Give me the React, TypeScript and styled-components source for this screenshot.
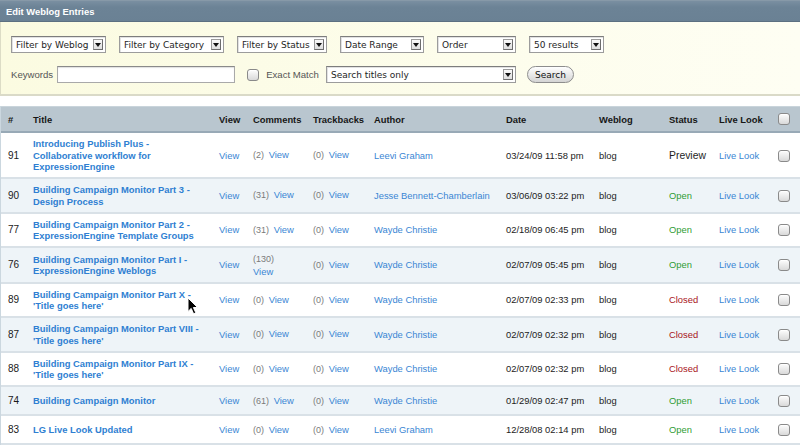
import * as React from "react";
import styled, { createGlobalStyle } from "styled-components";

type Status = "Preview" | "Open" | "Closed";

type Entry = {
  id: number;
  title: string;
  comments: number;
  trackbacks: number;
  author: string;
  date: string;
  status: Status;
};

const entries: Array<Entry> = [
  { id: 91, title: "Introducing Publish Plus - Collaborative workflow for ExpressionEngine", comments: 2, trackbacks: 0, author: "Leevi Graham", date: "03/24/09 11:58 pm", status: "Preview" },
  { id: 90, title: "Building Campaign Monitor Part 3 - Design Process", comments: 31, trackbacks: 0, author: "Jesse Bennett-Chamberlain", date: "03/06/09 03:22 pm", status: "Open" },
  { id: 77, title: "Building Campaign Monitor Part 2 - ExpressionEngine Template Groups", comments: 31, trackbacks: 0, author: "Wayde Christie", date: "02/18/09 06:45 pm", status: "Open" },
  { id: 76, title: "Building Campaign Monitor Part I - ExpressionEngine Weblogs", comments: 130, trackbacks: 0, author: "Wayde Christie", date: "02/07/09 05:45 pm", status: "Open" },
  { id: 89, title: "Building Campaign Monitor Part X - 'Title goes here'", comments: 0, trackbacks: 0, author: "Wayde Christie", date: "02/07/09 02:33 pm", status: "Closed" },
  { id: 87, title: "Building Campaign Monitor Part VIII - 'Title goes here'", comments: 0, trackbacks: 0, author: "Wayde Christie", date: "02/07/09 02:32 pm", status: "Closed" },
  { id: 88, title: "Building Campaign Monitor Part IX - 'Title goes here'", comments: 0, trackbacks: 0, author: "Wayde Christie", date: "02/07/09 02:32 pm", status: "Closed" },
  { id: 74, title: "Building Campaign Monitor", comments: 61, trackbacks: 0, author: "Wayde Christie", date: "01/29/09 02:47 pm", status: "Open" },
  { id: 83, title: "LG Live Look Updated", comments: 0, trackbacks: 0, author: "Leevi Graham", date: "12/28/08 02:14 pm", status: "Open" },
];

const filters = [
  { label: "Filter by Weblog", w: 95 },
  { label: "Filter by Category", w: 105 },
  { label: "Filter by Status", w: 90 },
  { label: "Date Range", w: 84 },
  { label: "Order", w: 79 },
  { label: "50 results", w: 75 },
];

const columns = [
  { label: "#", w: 25 },
  { label: "Title", w: 186 },
  { label: "View", w: 34 },
  { label: "Comments", w: 60 },
  { label: "Trackbacks", w: 61 },
  { label: "Author", w: 132 },
  { label: "Date", w: 93 },
  { label: "Weblog", w: 70 },
  { label: "Status", w: 50 },
  { label: "Live Look", w: 59 },
  { label: "", w: 30 },
];

export default function App() {
  return (
    <Page>
      <GlobalStyle />
      <TitleBar>Edit Weblog Entries</TitleBar>
      <FilterPanel>
        <FilterRow>
          {filters.map((f) => (
            <SelectBox $w={f.w} key={f.label}>
              {f.label}
              <Arrow />
            </SelectBox>
          ))}
        </FilterRow>
        <FilterRow>
          <Label>Keywords</Label>
          <TextInput />
          <ExactMatch>
            <Check />
            <Label>Exact Match</Label>
          </ExactMatch>
          <SelectBox $w={190}>
            Search titles only
            <Arrow />
          </SelectBox>
          <SearchButton>Search</SearchButton>
        </FilterRow>
      </FilterPanel>

      <Table>
        <colgroup>
          {columns.map((c, i) => (
            <col key={i} style={{ width: c.w }} />
          ))}
        </colgroup>
        <thead>
          <tr>
            {columns.map((c, i) => (
              <Th key={i}>{c.label === "" ? <Check /> : c.label}</Th>
            ))}
          </tr>
        </thead>
        <tbody>
          {entries.map((e, index) => (
            <Row $alt={index % 2 === 1} key={e.id}>
              <IdCell>{e.id}</IdCell>
              <TitleCell>
                <TitleLink>{e.title}</TitleLink>
              </TitleCell>
              <Td>
                <Link>View</Link>
              </Td>
              <CountCell>
                <Count>({e.comments})</Count> <Link>View</Link>
              </CountCell>
              <CountCell>
                <Count>({e.trackbacks})</Count> <Link>View</Link>
              </CountCell>
              <Td>
                <Link>{e.author}</Link>
              </Td>
              <Td>{e.date}</Td>
              <Td>blog</Td>
              <Td>
                <StatusText $status={e.status}>{e.status}</StatusText>
              </Td>
              <Td>
                <Link>Live Look</Link>
              </Td>
              <Td>
                <Check />
              </Td>
            </Row>
          ))}
        </tbody>
      </Table>

      <Cursor width="12" height="18" viewBox="0 0 12 18">
        <path
          d="M1 1 L1 14.5 L4.2 11.4 L6.6 16.8 L8.8 15.8 L6.4 10.5 L10.6 10.5 Z"
          fill="#000"
          stroke="#fff"
          strokeWidth="1"
          strokeLinejoin="round"
        />
      </Cursor>
    </Page>
  );
}

const GlobalStyle = createGlobalStyle`
  html, body {
    margin: 0;
    padding: 0;
    background: #fff;
  }
  body {
    font-family: "Liberation Sans", Arial, sans-serif;
    font-size: 9.4px;
    color: #222;
  }
`;

const Page = styled.div`
  position: relative;
  width: 800px;
  height: 446px;
  overflow: hidden;
`;

const TitleBar = styled.div`
  height: 22px;
  box-sizing: border-box;
  padding: 0 6px;
  display: flex;
  align-items: center;
  background: linear-gradient(#7a8fa1, #6c8396 30%, #6a8194);
  border-top: 1px solid #8799a8;
  border-bottom: 1px solid #5c7081;
  color: #fff;
  font-weight: bold;
  font-size: 9.4px;
`;

const FilterPanel = styled.div`
  box-sizing: border-box;
  height: 74px;
  padding: 14px 10px 0;
  display: flex;
  flex-direction: column;
  gap: 13px;
  background: linear-gradient(to right, #fbfbe1, #fdfdec 60%, #fefef3);
  border-left: 1px solid #dcdcc6;
  border-bottom: 2px solid #dadac8;
`;

const FilterRow = styled.div`
  display: flex;
  align-items: center;
  gap: 13px;
  height: 17px;
`;

const SelectBox = styled.div<{ $w: number }>`
  width: ${(p) => p.$w}px;
  height: 17px;
  box-sizing: border-box;
  border: 1px solid #9c9c9c;
  border-top-color: #7d7d7d;
  box-shadow: inset 1px 1px 0 #e2e2e2;
  background: #fff;
  display: flex;
  align-items: center;
  justify-content: space-between;
  padding: 0 2px 0 4px;
  font-family: "DejaVu Sans", sans-serif;
  font-size: 9px;
  color: #1e1e1e;
  white-space: nowrap;
`;

const Arrow = styled.span`
  width: 10px;
  height: 11px;
  box-sizing: border-box;
  border: 1px solid #9a9a9a;
  border-right-color: #6d6d6d;
  border-bottom-color: #6d6d6d;
  background: linear-gradient(#fafafa, #dedede);
  display: flex;
  align-items: center;
  justify-content: center;
  &::after {
    content: "";
    border-left: 3px solid transparent;
    border-right: 3px solid transparent;
    border-top: 4px solid #111;
  }
`;

const Label = styled.span`
  color: #555;
  font-size: 9.6px;
`;

const TextInput = styled.div`
  width: 178px;
  height: 17px;
  box-sizing: border-box;
  margin-left: -9px;
  border: 1px solid #a9a9a9;
  border-top-color: #8a8a8a;
  box-shadow: inset 0 1px 1px #e0e0e0;
  background: #fff;
`;

const ExactMatch = styled.div`
  display: flex;
  align-items: center;
  gap: 7px;
  margin-left: -1px;
  margin-right: -6px;
`;

const Check = styled.span`
  display: inline-block;
  width: 12px;
  height: 12px;
  box-sizing: border-box;
  border: 1px solid #8a8a8a;
  border-radius: 3px;
  background: linear-gradient(#fdfdfd, #d9d9d9);
  box-shadow: inset 0 1px 0 #fff;
  vertical-align: middle;
`;

const SearchButton = styled.div`
  width: 47px;
  height: 17px;
  box-sizing: border-box;
  margin-left: -2px;
  border: 1px solid #8d8d8d;
  border-radius: 9px;
  background: linear-gradient(#ffffff, #e9e9e9 50%, #d4d4d4);
  display: flex;
  align-items: center;
  justify-content: center;
  font-family: "DejaVu Sans", sans-serif;
  font-size: 9px;
  color: #111;
`;

const Table = styled.table`
  margin-top: 10px;
  width: 800px;
  table-layout: fixed;
  border-collapse: separate;
  border-spacing: 0;
  border-left: 1px solid #cbd7df;
`;

const Th = styled.th`
  height: 24px;
  padding: 0 0 0 7px;
  text-align: left;
  font-weight: bold;
  font-size: 9.4px;
  color: #161616;
  background: #b9c6cf;
  border-top: 1px solid #c9d4db;
  border-bottom: 2px solid #98a9b6;
  white-space: nowrap;
`;

const Row = styled.tr<{ $alt: boolean }>`
  height: 29px;
  background: ${(p) => (p.$alt ? "#eef4f8" : "#fff")};
`;

const Td = styled.td`
  padding: 5px 0 4.5px 7px;
  line-height: 11.5px;
  vertical-align: middle;
  border-bottom: 2px solid #d9e1e7;
  white-space: nowrap;
  overflow: hidden;
`;

const IdCell = styled(Td)`
  font-size: 10px;
  color: #1a1a1a;
`;

const TitleCell = styled(Td)`
  white-space: normal;
  padding-right: 9px;
`;

const CountCell = styled(Td)`
  white-space: normal;
  padding-right: 8px;
`;

const TitleLink = styled.a`
  color: #2f7fd2;
  font-weight: bold;
  text-decoration: none;
`;

const Link = styled.a`
  color: #3a86d4;
  text-decoration: none;
  white-space: nowrap;
`;

const Count = styled.span`
  color: #7a7a7a;
  font-size: 9px;
  margin-right: 2px;
`;

const statusColors: Record<Status, string> = {
  Preview: "#1e1e1e",
  Open: "#2f9c35",
  Closed: "#a8151b",
};

const StatusText = styled.span<{ $status: Status }>`
  color: ${(p) => statusColors[p.$status]};
  font-size: ${(p) => (p.$status === "Preview" ? "10.4px" : "9.4px")};
`;

const Cursor = styled.svg`
  position: absolute;
  left: 187px;
  top: 297px;
`;
